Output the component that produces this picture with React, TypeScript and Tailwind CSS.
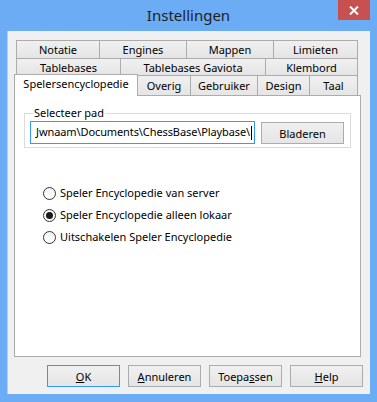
import type { ReactNode } from 'react';

const font = { fontFamily: '"Noto Sans", "Segoe UI", Arial, sans-serif' };

function Tab({ w, children, last }: { w: string; children: ReactNode; last?: boolean }) {
  return (
    <div
      className={`${w} h-full flex items-center justify-center border-t border-l border-[#acacac] ${
        last ? 'border-r' : ''
      } bg-gradient-to-b from-[#f0f0f0] to-[#e5e5e5] text-[11px] text-black leading-none`}
    >
      {children}
    </div>
  );
}

function Radio({ checked, label }: { checked?: boolean; label: string }) {
  return (
    <label className="flex items-center h-[22px] gap-[4px] text-[11px] text-black">
      <span className="w-[13px] h-[13px] rounded-full border border-[#333] bg-gradient-to-b from-[#f4f4f4] to-white flex items-center justify-center">
        {checked && <span className="w-[7px] h-[7px] rounded-full bg-[#1a1a1a]" />}
      </span>
      <span>{label}</span>
    </label>
  );
}

function Btn({ children, primary, w = 'w-[73px]' }: { children: ReactNode; primary?: boolean; w?: string }) {
  return (
    <button
      className={`${w} h-[22px] border ${
        primary ? 'border-[#3399ff]' : 'border-[#acacac]'
      } bg-gradient-to-b from-[#f0f0f0] to-[#e5e5e5] text-[11px] text-black leading-none flex items-center justify-center`}
    >
      {children}
    </button>
  );
}

export default function App() {
  return (
    <div className="w-[377px] h-[402px] bg-[#6cacf4] flex flex-col" style={font}>
      {/* title bar */}
      <div className="h-[31px] relative flex items-start justify-center">
        <span className="mt-[4px] text-[15px] text-[#1e1e1e]">Instellingen</span>
        <div className="absolute right-[7px] top-0 w-[32px] h-[20px] bg-[#c75050] flex items-center justify-center">
          <svg width="10" height="9" viewBox="0 0 10 9">
            <path d="M1 0.5 L9 8.5 M9 0.5 L1 8.5" stroke="#fff" strokeWidth="2" />
          </svg>
        </div>
      </div>

      {/* client area */}
      <div className="mx-[7px] mb-[8px] flex-1 bg-[#f0f0f0] border-l border-[#b9cde4] flex flex-col">
        <div className="ml-[6px] mt-[9px] w-[347px]">
          {/* tabs */}
          <div className="ml-[2px] w-[342px]">
            <div className="flex h-[18px]">
              <Tab w="w-[83px]">Notatie</Tab>
              <Tab w="w-[87px]">Engines</Tab>
              <Tab w="w-[87px]">Mappen</Tab>
              <Tab w="w-[85px]" last>Limieten</Tab>
            </div>
            <div className="flex h-[17px]">
              <Tab w="w-[104px]">Tablebases</Tab>
              <Tab w="w-[145px]">Tablebases Gaviota</Tab>
              <Tab w="w-[93px]" last>Klembord</Tab>
            </div>
            <div className="flex items-end h-[20px]">
              <div className="relative z-10 -ml-[2px] -mb-px w-[124px] h-[22px] bg-white border-t border-l border-r border-[#acacac] text-[11px] text-black flex items-start justify-center pt-[3px] leading-none">
                Spelersencyclopedie
              </div>
              <div className="flex h-full -ml-px">
                <Tab w="w-[53px]">Overig</Tab>
                <Tab w="w-[67px]">Gebruiker</Tab>
                <Tab w="w-[52px]">Design</Tab>
                <Tab w="w-[49px]" last>Taal</Tab>
              </div>
            </div>
          </div>

          {/* panel */}
          <div className="h-[262px] bg-white border border-[#acacac] pt-[10px] px-[9px]">
            <fieldset className="border border-[#dcdcdc] h-[42px] px-[5px] pt-[1px] flex items-start gap-[6px]">
              <legend className="ml-[3px] px-[1px] text-[11px] text-black leading-[14px]">Selecteer pad</legend>
              <div className="w-[225px] h-[23px] border border-[#3399ff] bg-white flex items-center pl-[5px] text-[11px] tracking-[-0.1px] text-black whitespace-nowrap overflow-hidden">
                Jwnaam\Documents\ChessBase\Playbase\
                <span className="inline-block w-px h-[14px] bg-black ml-[1px]" />
              </div>
              <div className="mt-[1px]">
                <Btn w="w-[83px]">Bladeren</Btn>
              </div>
            </fieldset>

            <div className="mt-[34px] ml-[19px] flex flex-col">
              <Radio label="Speler Encyclopedie van server" />
              <Radio checked label="Speler Encyclopedie alleen lokaar" />
              <Radio label="Uitschakelen Speler Encyclopedie" />
            </div>
          </div>
        </div>

        {/* bottom buttons */}
        <div className="mt-[8px] ml-[39px] flex gap-[8px]">
          <Btn primary>
            <span><u>O</u>K</span>
          </Btn>
          <Btn>
            <span><u>A</u>nnuleren</span>
          </Btn>
          <Btn>
            <span>Toepa<u>s</u>sen</span>
          </Btn>
          <Btn>
            <span><u>H</u>elp</span>
          </Btn>
        </div>
      </div>
    </div>
  );
}
